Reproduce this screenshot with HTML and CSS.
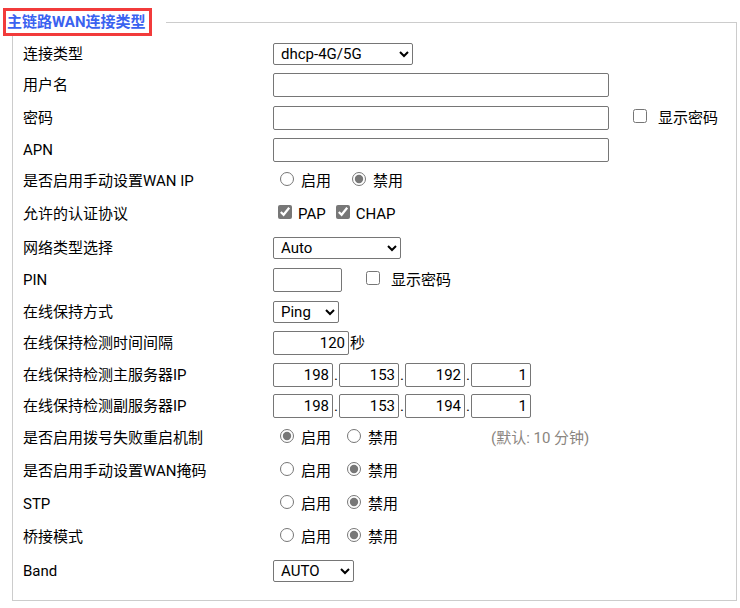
FILE: index.html
```html
<!DOCTYPE html>
<html lang="zh-CN">
  <head>
    <meta charset="UTF-8" />
    <meta name="viewport" content="width=device-width, initial-scale=1.0" />
    <title>WAN 设置</title>
    <link rel="stylesheet" href="styles.css">
  </head>
  <body>
    <div class="page">
      <fieldset class="wan-box">
        <legend><span class="legend-title">主链路WAN连接类型</span></legend>

        <div class="form-grid">
          <div class="label">连接类型</div>
          <div class="field">
            <select class="sel-conn"><option>dhcp-4G/5G</option></select>
          </div>

          <div class="label">用户名</div>
          <div class="field"><input type="text" class="w-long" /></div>

          <div class="label">密码</div>
          <div class="field">
            <input type="password" class="w-long" />
            <label class="show-pwd"><input type="checkbox" /><span>显示密码</span></label>
          </div>

          <div class="label">APN</div>
          <div class="field"><input type="text" class="w-long" /></div>

          <div class="label">是否启用手动设置WAN IP</div>
          <div class="field radio-group wide">
            <label class="opt"><input type="radio" name="wanip" /><span>启用</span></label>
            <label class="opt"><input type="radio" name="wanip" checked /><span>禁用</span></label>
          </div>

          <div class="label">允许的认证协议</div>
          <div class="field check-group">
            <label class="chk"><input type="checkbox" checked /><span>PAP</span></label>
            <label class="chk"><input type="checkbox" checked /><span>CHAP</span></label>
          </div>

          <div class="label">网络类型选择</div>
          <div class="field">
            <select class="sel-net"><option>Auto</option></select>
          </div>

          <div class="label">PIN</div>
          <div class="field">
            <input type="text" class="w-pin" />
            <label class="show-pwd"><input type="checkbox" /><span>显示密码</span></label>
          </div>

          <div class="label">在线保持方式</div>
          <div class="field">
            <select class="sel-ping"><option>Ping</option></select>
          </div>

          <div class="label">在线保持检测时间间隔</div>
          <div class="field">
            <input type="text" class="w-sec" value="120" /><span class="unit">秒</span>
          </div>

          <div class="label">在线保持检测主服务器IP</div>
          <div class="field ip-group">
            <input type="text" class="ip" value="198" /><span class="dot">.</span><input type="text" class="ip" value="153" /><span class="dot">.</span><input type="text" class="ip" value="192" /><span class="dot">.</span><input type="text" class="ip" value="1" />
          </div>

          <div class="label">在线保持检测副服务器IP</div>
          <div class="field ip-group">
            <input type="text" class="ip" value="198" /><span class="dot">.</span><input type="text" class="ip" value="153" /><span class="dot">.</span><input type="text" class="ip" value="194" /><span class="dot">.</span><input type="text" class="ip" value="1" />
          </div>

          <div class="label">是否启用拨号失败重启机制</div>
          <div class="field radio-group">
            <label class="opt"><input type="radio" name="reboot" checked /><span>启用</span></label>
            <label class="opt"><input type="radio" name="reboot" /><span>禁用</span></label>
            <span class="hint">(默认: 10 分钟)</span>
          </div>

          <div class="label">是否启用手动设置WAN掩码</div>
          <div class="field radio-group">
            <label class="opt"><input type="radio" name="mask" /><span>启用</span></label>
            <label class="opt"><input type="radio" name="mask" checked /><span>禁用</span></label>
          </div>

          <div class="label">STP</div>
          <div class="field radio-group">
            <label class="opt"><input type="radio" name="stp" /><span>启用</span></label>
            <label class="opt"><input type="radio" name="stp" checked /><span>禁用</span></label>
          </div>

          <div class="label">桥接模式</div>
          <div class="field radio-group">
            <label class="opt"><input type="radio" name="bridge" /><span>启用</span></label>
            <label class="opt"><input type="radio" name="bridge" checked /><span>禁用</span></label>
          </div>

          <div class="label">Band</div>
          <div class="field">
            <select class="sel-band"><option>AUTO</option></select>
          </div>
        </div>
      </fieldset>
    </div>
  </body>
</html>
```

FILE: styles.css
```css
body {
  margin: 0;
  font-family: Roboto, "Noto Sans CJK SC", sans-serif;
  font-size: 15px;
  color: #000;
  background-color: #fff;
}

.page {
  padding: 0 3px 0 12px;
}

.wan-box {
  margin: 8px 0 0 0;
  padding: 2px 10px 12px 10px;
  border: 1px solid #ccc;
  min-width: 0;
}

.wan-box legend {
  margin-left: -20px;
  padding: 0 14px 0 0;
}

.legend-title {
  display: inline-block;
  border: 3px solid #f23b3b;
  padding: 0 4px 0 1px;
  line-height: 22px;
  font-weight: bold;
  color: #3a62f0;
}

.form-grid {
  display: grid;
  grid-template-columns: 250px 1fr;
  grid-template-rows: 31px 32px 33px 31px 32px 34px 33px 32px 31px 32px 31px 32px 32px 33px 33px 34px 34px;
  align-items: center;
  line-height: 20px;
}

.field {
  display: flex;
  align-items: center;
}

/* text inputs */
input[type="text"],
input[type="password"] {
  box-sizing: border-box;
  height: 24px;
  margin: 0;
  padding: 0 3px;
  border: 1px solid #767676;
  border-radius: 2px;
  font: inherit;
  color: #000;
}

.w-long {
  width: 336px;
}

.w-pin {
  width: 69px;
}

.w-sec {
  width: 76px;
  text-align: right;
}

.unit {
  margin-left: 1px;
}

.ip {
  width: 60px;
  text-align: right;
}

.dot {
  width: 6px;
  padding-left: 1px;
  box-sizing: border-box;
}

/* selects */
select {
  box-sizing: border-box;
  height: 22px;
  margin: 0;
  padding: 0 0 0 3px;
  border: 1px solid #767676;
  border-radius: 2px;
  background-color: #fff;
  font: inherit;
  color: #000;
}

.sel-conn {
  width: 140px;
}

.sel-net {
  width: 128px;
}

.sel-ping {
  width: 66px;
}

.sel-band {
  width: 81px;
}

/* radios and checkboxes */
input[type="radio"],
input[type="checkbox"] {
  width: 14px;
  height: 14px;
  accent-color: #777;
}

.opt,
.chk,
.show-pwd {
  display: inline-flex;
  align-items: center;
}

.opt input {
  margin: 0 7px 4px 7px;
}

.radio-group {
  gap: 9px;
}

.radio-group.wide {
  gap: 14px;
}

.chk input {
  margin: 0 6px 4px 5px;
}

.check-group {
  gap: 5px;
}

.show-pwd {
  margin-left: 24px;
}

.show-pwd input {
  margin: 0 11px 4px 0;
}

.hint {
  margin-left: 84px;
  color: #8a8580;
}
```
